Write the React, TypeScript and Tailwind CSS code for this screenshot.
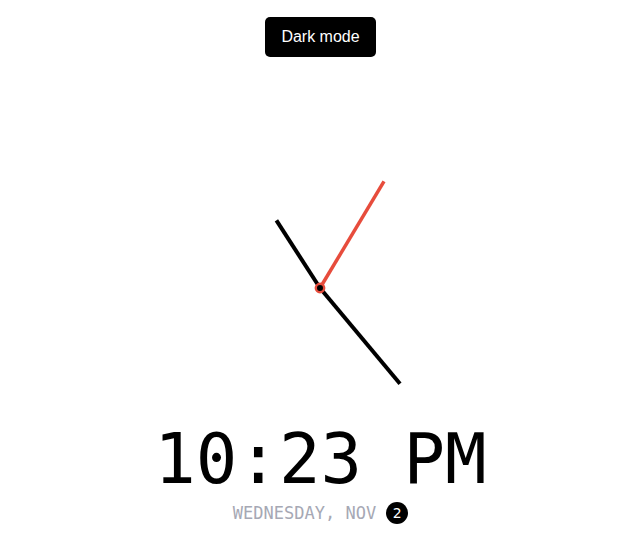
import React from 'react';

const Clock = () => {
    // hand endpoints measured relative to the centre (130,130)
    const c = 130;
    return (
        <svg width="260" height="260" viewBox="0 0 260 260" className="block">
            <line x1={c} y1={c} x2={c - 43.6} y2={c - 67.6} stroke="#000" strokeWidth="4" />
            <line x1={c} y1={c} x2={c + 80} y2={c + 95.7} stroke="#000" strokeWidth="4" />
            <line x1={c} y1={c} x2={c + 64} y2={c - 106.6} stroke="#e74c3c" strokeWidth="3.5" />
            <circle cx={c} cy={c} r="4.2" fill="#000" stroke="#e74c3c" strokeWidth="2.4" />
        </svg>
    );
};

const App = () => {
    return (
        <div className="w-full min-h-[537px] bg-white flex flex-col items-center pt-[17px]">
            {/* Theme toggle */}
            <button className="bg-black text-white text-[16px] leading-6 px-4 py-2 rounded-[5px] font-['Liberation_Sans',Arial,sans-serif]">
                Dark mode
            </button>

            {/* Analog clock */}
            <div className="mt-[102px] -translate-x-px -translate-y-px">
                <Clock />
            </div>

            {/* Digital time */}
            <div className="mt-[6px] text-[69px] leading-[68px] text-black font-['DejaVu_Sans_Mono',monospace] whitespace-pre">
                10:23 PM
            </div>

            {/* Date */}
            <div className="mt-2 flex items-center gap-[10px] h-6 text-[17px] leading-6 text-[#a6a8b4] font-['DejaVu_Sans_Mono',monospace]">
                <span>WEDNESDAY, NOV</span>
                <span className="w-[22px] h-[22px] rounded-full bg-black text-white text-[14px] leading-none flex items-center justify-center font-['DejaVu_Sans',sans-serif]">
                    2
                </span>
            </div>
        </div>
    );
};

export default App;
